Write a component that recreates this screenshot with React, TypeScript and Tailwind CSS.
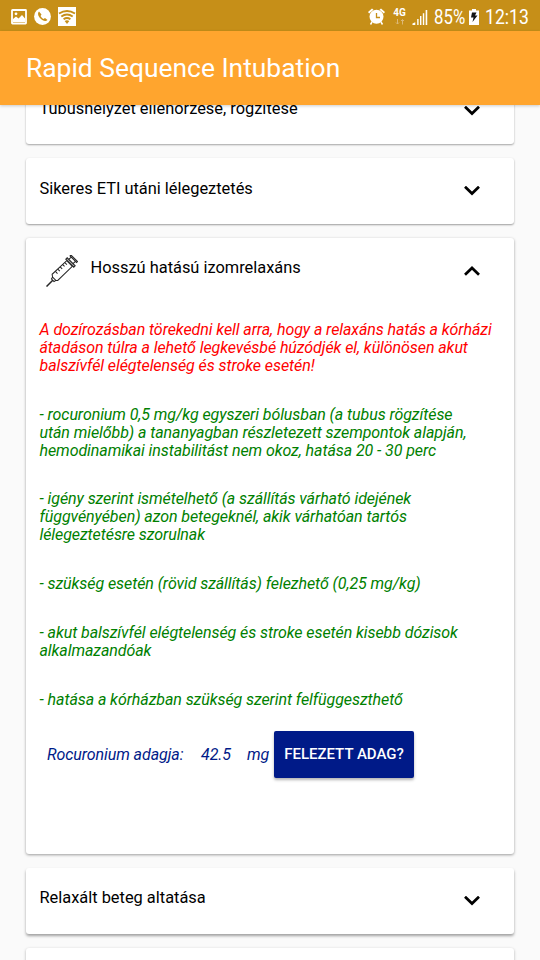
import type { ReactNode } from 'react';

function Chevron({ up = false }: { up?: boolean }) {
  return (
    <svg width="16" height="10" viewBox="0 0 16 10" fill="none" stroke="#000" strokeWidth="2.7">
      {up ? <path d="M1 8.8 8 2l7 6.8" /> : <path d="M1 .7 8 7.500l7-6.800" />}
    </svg>
  );
}

function Syringe() {
  return (
    <svg width="32" height="32" viewBox="0 0 34 34" fill="none" stroke="#262626" strokeWidth="1.1">
      <path d="M.5 33.500 7.500 26.500" strokeWidth="1.6" />
      <path d="M7 23.500 10.500 27l-2 1.200-2.700-2.700zM7 23.500l-.5-3L22 6l6 6-15.500 15-2.500 0" />
      <path d="m10 17.500 2.200 2.200M12.500 15l2.200 2.200M15 12.500l2.200 2.200M17.500 10l2.200 2.200M20 8l2.200 2.200" />
      <path d="m21 4.500 8.500 8.500 1.500-1.500L22.500 3zM24.500 4.500l2-2M29 9l2-2M25.500 1l7 7 1-1-7-7z" fill="#bbb" />
    </svg>
  );
}

function Row({ title, icon, open = false, raised = false }: { title: string; icon?: ReactNode; open?: boolean; raised?: boolean }) {
  return (
    <div className="flex h-[66px] shrink-0 items-center justify-between pr-[34.500px] pl-[13.500px]">
      <div className="flex items-center">
        {icon}
        <h2 className={`text-[16.4px] whitespace-nowrap ${open || raised ? 'mb-[6px]' : 'mb-[4px]'}`}>{title}</h2>
      </div>
      <Chevron up={open} />
    </div>
  );
}

function Card({ children, className = '' }: { children?: ReactNode; className?: string }) {
  return (
    <section className={`flex shrink-0 flex-col rounded-[3px] bg-white ${className}`}>
      {children}
    </section>
  );
}

function StatusBar() {
  return (
    <header className="flex h-[31px] shrink-0 items-center justify-between bg-[#c68f18] pr-[12px] pl-[11px] text-white">
      <div className="flex items-center gap-[7px] pt-[2px]">
        <svg width="16" height="16" viewBox="0 0 16 16">
          <rect x="1" y="1" width="14" height="13.500" rx=".5" fill="none" stroke="white" strokeWidth="1.800" />
          <path d="M2 13V10l3-2.500 2.500 2L11 6l3 3.500V13z" fill="white" />
          <circle cx="5" cy="4.800" r="1.400" fill="white" />
        </svg>
        <svg width="17" height="17" viewBox="0 0 17 17">
          <circle cx="8.500" cy="8.500" r="8.400" fill="white" />
          <path d="M5 3.500c-2 2-.5 5 1.500 7s5 3.500 7 1.500l-2.500-2-1.500 1C8.500 10.500 7 9 6.500 8L7.500 6.500z" fill="#c68f18" />
        </svg>
        <svg width="18" height="19" viewBox="0 0 18 19">
          <path d="M0 0h18v19H0z" fill="white" />
          <path d="M1 6.500q8-5 16 0M3.300 9.500q5.700-4 11.400 0M5.600 12.300q3.400-2.500 6.800 0" fill="none" stroke="#c68f18" strokeWidth="2" />
          <path d="M6.700 14q2.300-1.500 4.600 0L9 17z" fill="#c68f18" />
        </svg>
      </div>
      <div className="flex items-center pt-[2px]">
        <svg width="17" height="17" viewBox="0 0 17 17">
          <path d="M0 4 4 .5l1.500 1.200L1.200 5.500zM17 4 13 .5l-1.500 1.200 4.300 3.800z" fill="white" />
          <circle cx="8.500" cy="8.800" r="7" fill="white" />
          <path d="m4 14-1.500 2.500M13 14l1.500 2.500" stroke="white" strokeWidth="1.500" />
          <path d="M8.500 5v4.500h3.500" fill="none" stroke="#c68f18" strokeWidth="1.300" />
        </svg>
        <div className="ml-[7px] flex w-[15px] flex-col items-center">
          <span className="text-[10px] leading-[10px] font-bold">4G</span>
          <svg className="mt-[1px]" width="10" height="6" viewBox="0 0 10 6" fill="none" stroke="#dcb877">
            <path d="M2.500 0v5M1 3.500 2.500 5 4 3.500M7.500 5.500v-5M6 2 7.500.5 9 2" />
          </svg>
        </div>
        <svg className="ml-[5px]" width="16" height="16" viewBox="0 0 16 17" fill="white">
          <path d="M0 17v-1.500L3 14v3zM5 10.500h1.500V17H5zM8 7.500h1.500V17H8zM11 4.500h1.500V17H11zM14 1h1.700v16H14z" />
        </svg>
        <span className="ml-[6px] w-[32px] text-[20px] leading-[20px]"><span className="inline-block origin-left scale-x-[0.84]">85%</span></span>
        <svg className="ml-[3px]" width="10" height="16" viewBox="0 0 10 16">
          <path d="M3 0h4v1.500h3V16H0V1.500h3z" fill="white" />
          <path d="M3 3.500h4.500L6 6.500h2.500L3.500 13l1-4.500H2z" fill="#151515" />
        </svg>
        <span className="ml-[6px] w-[43px] text-[20px] leading-[20px]"><span className="inline-block origin-left scale-x-[0.88]">12:13</span></span>
      </div>
    </header>
  );
}

const notes = [
  ['- rocuronium 0,5 mg/kg egyszeri bólusban (a tubus rögzítése', 'után mielőbb) a tananyagban részletezett szempontok alapján,', 'hemodinamikai instabilitást nem okoz, hatása 20 - 30 perc'],
  ['- igény szerint ismételhető (a szállítás várható idejének', 'függvényében) azon betegeknél, akik várhatóan tartós', 'lélegeztetésre szorulnak'],
  ['- szükség esetén (rövid szállítás) felezhető (0,25 mg/kg)'],
  ['- akut balszívfél elégtelenség és stroke esetén kisebb dózisok', 'alkalmazandóak'],
  ['- hatása a kórházban szükség szerint felfüggeszthető'],
];

function Note({ lines, className }: { lines: string[]; className: string }) {
  return (
    <p className={className}>
      {lines.map((line) => <span key={line} className="block whitespace-nowrap">{line}</span>)}
    </p>
  );
}

export default function App() {
  return (
    <div className="flex h-[960px] w-[540px] flex-col overflow-hidden bg-[#fafafa] font-[Roboto,sans-serif] text-black">
      <StatusBar />
      <div className="z-10 flex h-[74px] shrink-0 items-center bg-[#ffa52e] pt-[2px] pl-[26px] shadow-[0_1px_3px_rgba(0,0,0,0.2)]">
        <h1 className="text-[26.400px] text-white">Rapid Sequence Intubation</h1>
      </div>
      <main className="flex min-h-0 flex-1 flex-col gap-[14px] overflow-hidden px-[26px]">
        <Card className="-mt-[27px] shadow-[0_1px_2px_rgba(0,0,0,0.35)]">
          <Row title="Tubushelyzet ellenőrzése, rögzítése" />
        </Card>
        <Card className="shadow-[0_1px_2px_rgba(0,0,0,0.38)]"><Row title="Sikeres ETI utáni lélegeztetés" /></Card>
        <Card className="h-[616px] shadow-[0_1px_3px_rgba(0,0,0,0.38)]">
          <Row title="Hosszú hatású izomrelaxáns" open icon={<div className="mr-[13px] ml-[6px] w-[32px]"><Syringe /></div>} />
          <div className="flex flex-col gap-[30.750px] px-[13.500px] pt-[16.750px] text-[16px] leading-[18px] tracking-[-0.08px] italic">
            <Note lines={['A dozírozásban törekedni kell arra, hogy a relaxáns hatás a kórházi', 'átadáson túlra a lehető legkevésbé húzódjék el, különösen akut', 'balszívfél elégtelenség és stroke esetén!']} className="text-[#ff0000]" />
            {notes.map((lines) => <Note key={lines[0]} lines={lines} className="text-[#008000]" />)}
          </div>
          <div className="mt-[22.500px] flex h-[47px] items-center pl-[21px] text-[16px] tracking-[-0.08px] text-[#001a88] italic">
            <span className="w-[154px]">Rocuronium adagja:</span>
            <span className="w-[46px]">42.5</span>
            <span className="w-[27px]">mg</span>
            <button className="h-[47px] w-[140px] rounded-[2px] bg-[#001a88] text-[15px] font-medium tracking-normal whitespace-nowrap text-white not-italic shadow-[0_2px_3px_rgba(0,0,0,0.3)]">FELEZETT ADAG?</button>
          </div>
        </Card>
        <Card className="shadow-[0_2px_3px_rgba(0,0,0,0.36)]"><Row title="Relaxált beteg altatása" raised /></Card>
        <Card className="shadow-[0_1px_3px_rgba(0,0,0,0.3)]"><Row title="" /></Card>
      </main>
    </div>
  );
}
